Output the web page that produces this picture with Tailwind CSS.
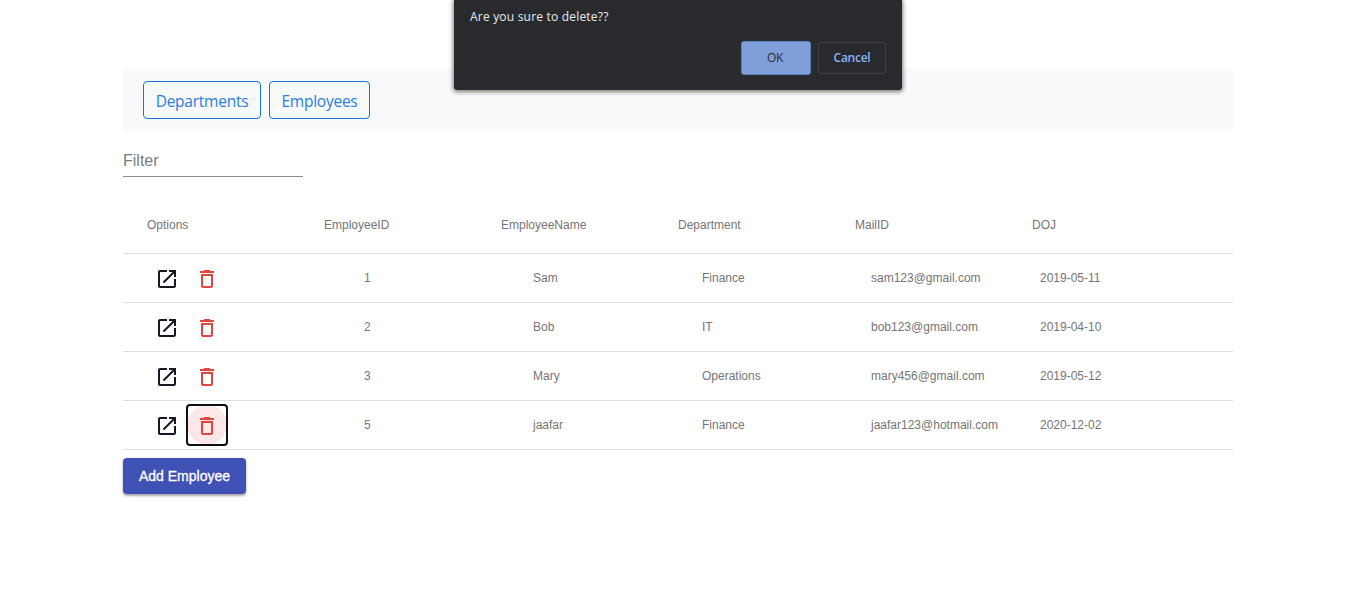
<!DOCTYPE html>
<html lang="en">
<head>
<meta charset="utf-8">
<title>Employees</title>
<script src="https://cdn.jsdelivr.net/npm/@tailwindcss/browser@4"></script>
</head>
<body class="bg-white font-['Liberation_Sans',sans-serif] h-[609px] overflow-hidden">
<svg class="hidden">
  <symbol id="edit" viewBox="0 0 24 24"><path d="M19 19H5V5h7V3H5c-1.11 0-2 .9-2 2v14c0 1.1.89 2 2 2h14c1.1 0 2-.9 2-2v-7h-2v7zM14 3v2h3.59l-9.83 9.83 1.41 1.41L19 6.41V10h2V3h-7z"/></symbol>
  <symbol id="trash" viewBox="0 0 24 24"><path d="M6 19c0 1.1.9 2 2 2h8c1.1 0 2-.9 2-2V7H6v12zM8 9h8v10H8V9zm7.500-5l-1-1h-5l-1 1H5v2h14V4h-3.500z"/></symbol>
</svg>

<div class="absolute left-[454px] top-0 w-[448px] h-[90px] bg-[#292a2d] rounded-b-[3px] shadow-[0_1px_4px_1px_rgba(0,0,0,0.5)] font-['Open_Sans',sans-serif] px-4 pt-2">
  <p class="text-[12px] leading-[18px] text-[#e8eaed] whitespace-nowrap"><span class="inline-block tracking-[0.2px]">Are you sure to delete??</span></p>
  <div class="flex justify-end gap-[7px] mt-[15px] text-[12px]">
    <button class="w-[70px] h-[34px] leading-[30px] rounded-[3px] bg-[#7f9fd9] border border-[#5d7fbd] text-[#292e38] font-medium tracking-[-0.3px] pr-[2px]">OK</button>
    <button class="w-[68px] h-8 mt-px leading-[28px] rounded-[3px] border border-[#3f4146] text-[#8ab4f8] font-semibold tracking-[-0.25px]">Cancel</button>
  </div>
</div>

<main class="ml-[123px] w-[1110px] pt-[69px]">
  <nav class="h-[62px] bg-[#f8f9fa] flex gap-2 pl-5 pt-3 font-['Open_Sans',sans-serif] text-[15.500px] leading-[34px] text-[#2b7de0]">
    <button class="w-[118px] h-[38px] pt-[2px] border border-[#1477d0] rounded-[4px] font-normal tracking-[-0.25px]">Departments</button>
    <button class="w-[101px] h-[38px] pt-[2px] border border-[#1477d0] rounded-[4px] font-normal tracking-[-0.25px]">Employees</button>
  </nav>
  <div class="mt-[18px] w-[180px] h-7 border-b border-[#8c8c8c] text-[16px] leading-[24px] text-[#7c7c7c]">Filter</div>

  <div class="mt-5 text-[12px] text-[#757575]">
    <div class="h-[57px] border-b border-[#e0e0e0] px-6 grid grid-cols-6 items-center">
      <div>Options</div><div>EmployeeID</div><div>EmployeeName</div><div>Department</div><div>MailID</div><div>DOJ</div>
    </div>
    <div class="h-[49px] border-b border-[#e0e0e0] pl-6 grid grid-cols-[217px_169px_169px_169px_169px_1fr] items-center">
      <div class="flex pt-[2px]"><div class="size-10 grid place-items-center"><svg class="size-6 fill-[#1c1624]"><use href="#edit"/></svg></div><div class="size-10 grid place-items-center"><svg class="size-6 fill-[#e0453f]"><use href="#trash"/></svg></div></div>
      <div>1</div><div>Sam</div><div>Finance</div><div>sam123@gmail.com</div><div>2019-05-11</div>
    </div>
    <div class="h-[49px] border-b border-[#e0e0e0] pl-6 grid grid-cols-[217px_169px_169px_169px_169px_1fr] items-center">
      <div class="flex pt-[2px]"><div class="size-10 grid place-items-center"><svg class="size-6 fill-[#1c1624]"><use href="#edit"/></svg></div><div class="size-10 grid place-items-center"><svg class="size-6 fill-[#e0453f]"><use href="#trash"/></svg></div></div>
      <div>2</div><div>Bob</div><div>IT</div><div>bob123@gmail.com</div><div>2019-04-10</div>
    </div>
    <div class="h-[49px] border-b border-[#e0e0e0] pl-6 grid grid-cols-[217px_169px_169px_169px_169px_1fr] items-center">
      <div class="flex pt-[2px]"><div class="size-10 grid place-items-center"><svg class="size-6 fill-[#1c1624]"><use href="#edit"/></svg></div><div class="size-10 grid place-items-center"><svg class="size-6 fill-[#e0453f]"><use href="#trash"/></svg></div></div>
      <div>3</div><div>Mary</div><div>Operations</div><div>mary456@gmail.com</div><div>2019-05-12</div>
    </div>
    <div class="h-[49px] border-b border-[#e0e0e0] pl-6 grid grid-cols-[217px_169px_169px_169px_169px_1fr] items-center">
      <div class="flex"><div class="size-10 grid place-items-center pt-[2px]"><svg class="size-6 fill-[#1c1624]"><use href="#edit"/></svg></div><div class="size-10 rounded-[3px] outline-2 -outline-offset-1 outline-[#101010] grid place-items-center pt-[2px] bg-[radial-gradient(circle,#fde8e7_19.5px,#fff_20px)]"><svg class="size-6 fill-[#e0453f]"><use href="#trash"/></svg></div></div>
      <div>5</div><div>jaafar</div><div>Finance</div><div>jaafar123@hotmail.com</div><div>2020-12-02</div>
    </div>
  </div>
  <button class="mt-2 block w-[123px] h-9 rounded-[4px] bg-[#3f51b5] text-white text-[14px] leading-9 [-webkit-text-stroke:0.3px_white] shadow-[0_2px_2px_rgba(0,0,0,0.25),0_1px_4px_rgba(0,0,0,0.15)]">Add Employee</button>
</main>
</body>
</html>
